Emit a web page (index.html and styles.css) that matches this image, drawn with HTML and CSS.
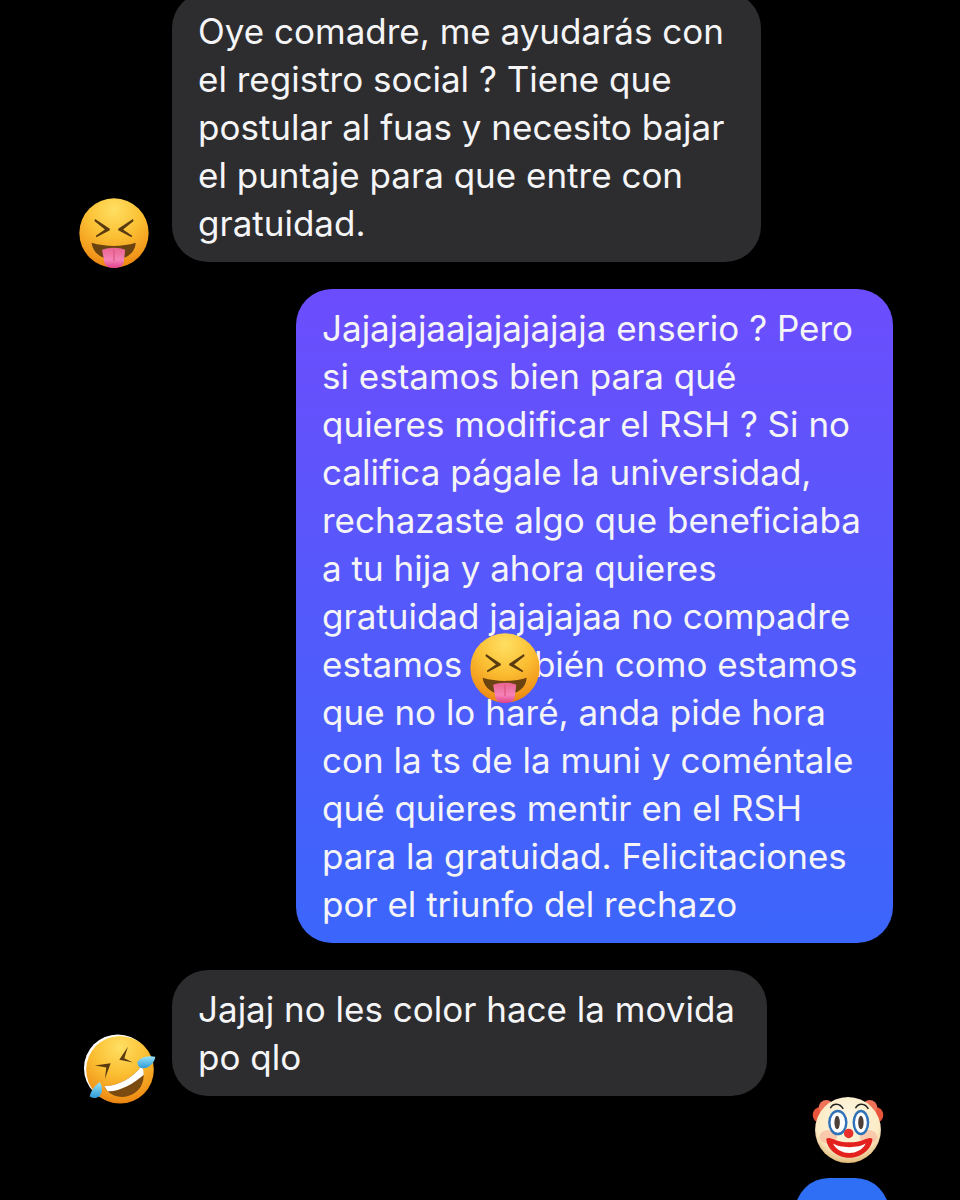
FILE: index.html
```html
<!DOCTYPE html>
<html lang="es">
<head>
<meta charset="utf-8">
<title>Chat</title>
<link rel="stylesheet" href="styles.css">
</head>
<body>
<svg class="defs" width="0" height="0" aria-hidden="true">
  <defs>
    <radialGradient id="face" cx="50%" cy="16%" r="90%">
      <stop offset="0" stop-color="#ffdf62"/>
      <stop offset=".45" stop-color="#fbbf33"/>
      <stop offset=".8" stop-color="#f2981c"/>
      <stop offset="1" stop-color="#e47a0c"/>
    </radialGradient>
    <linearGradient id="tongue" x1="0" y1="0" x2="0" y2="1">
      <stop offset="0" stop-color="#e8648f"/>
      <stop offset=".6" stop-color="#f583b8"/>
      <stop offset="1" stop-color="#e0408c"/>
    </linearGradient>
    <radialGradient id="cream" cx="50%" cy="35%" r="68%">
      <stop offset="0" stop-color="#fff9e6"/>
      <stop offset=".72" stop-color="#fbeac4"/>
      <stop offset="1" stop-color="#dcb26e"/>
    </radialGradient>
    <linearGradient id="tear" x1="0" y1="0" x2="0" y2="1">
      <stop offset="0" stop-color="#98e4f6"/>
      <stop offset="1" stop-color="#2f9bd8"/>
    </linearGradient>
    <symbol id="squint" viewBox="0 0 100 100">
      <circle cx="50" cy="50" r="49.5" fill="url(#face)"/>
      <path d="M23 30 L44 44 L44 46 L25 56 L24 54 L37 45 L22 33 Z" fill="#5a3a10"/>
      <path d="M77 30 L56 44 L56 46 L75 56 L76 54 L63 45 L78 33 Z" fill="#5a3a10"/>
      <path d="M18 64 C38 70 62 70 81 64 C80 80 66 88 50 88 C34 88 20 80 18 64 Z" fill="#6b4311"/>
      <path d="M33 74 C42 70 58 70 66 74 L64 91 C63 103 37 103 36 91 Z" fill="url(#tongue)"/>
      <path d="M50 74 L50 90" stroke="#d9537f" stroke-width="1.6" fill="none"/>
    </symbol>
    <symbol id="rofl" viewBox="0 0 100 100">
      <circle cx="47" cy="49" r="47" fill="#fff"/>
      <circle cx="50" cy="51" r="47" fill="url(#face)"/>
      <path d="M61 19 L49 37 L68 41 L56 35 Z" fill="#5a3a10"/>
      <path d="M15 45 L37 42 L29 64 L31 48 Z" fill="#5a3a10"/>
      <path d="M28 74 C48 74 68 62 80 46 C88 66 78 84 60 88 C48 91 34 86 28 74 Z" fill="#7a4a10"/>
      <path d="M28 74 C48 74 68 62 80 46 C82 50 83 54 83 58 C70 70 48 82 33 81 Z" fill="#fff"/>
      <path d="M74 40 C80 33 90 31 99 33 C98 42 90 49 82 49 C77 49 74 45 74 40 Z" fill="url(#tear)"/>
      <path d="M22 68 C26 74 26 82 22 87 C18 91 11 91 8 88 C9 81 15 73 22 68 Z" fill="url(#tear)"/>
    </symbol>
    <symbol id="clown" viewBox="-3 0 106 100">
      <circle cx="10" cy="28" r="12" fill="#e8553a"/>
      <circle cx="18" cy="17" r="11" fill="#ef7359"/>
      <circle cx="90" cy="28" r="12" fill="#e8553a"/>
      <circle cx="82" cy="17" r="11" fill="#ef7359"/>
      <circle cx="50" cy="50" r="48.5" fill="url(#cream)"/>
      <ellipse cx="21" cy="60" rx="13" ry="10" fill="#f6a68d" opacity=".5"/>
      <ellipse cx="80" cy="60" rx="13" ry="10" fill="#f6a68d" opacity=".5"/>
      <path d="M24 18 C28 10 38 10 43 19" stroke="#222" stroke-width="2.2" fill="none"/>
      <path d="M61 18 C65 10 75 10 80 19" stroke="#222" stroke-width="2.2" fill="none"/>
      <ellipse cx="35" cy="39" rx="12.5" ry="17" fill="#fff" stroke="#2f72b8" stroke-width="3.6"/>
      <ellipse cx="69" cy="39" rx="10.5" ry="17" fill="#fff" stroke="#2f72b8" stroke-width="3.6"/>
      <ellipse cx="34" cy="39" rx="4" ry="10" fill="#4d4038"/>
      <ellipse cx="69" cy="39" rx="4" ry="10" fill="#4d4038"/>
      <circle cx="51" cy="55" r="7" fill="#e9302c"/>
      <path d="M18 63 C24 58 30 68 52 68 C74 68 80 58 86 63 C85 80 68 91 52 91 C36 91 19 80 18 63 Z" fill="#e3221e"/>
      <path d="M28 70 C38 77 66 77 76 70 C72 79 62 84 52 84 C42 84 32 79 28 70 Z" fill="#fff"/>
    </symbol>
  </defs>
</svg>

<main class="chat">
  <div class="row row-in">
    <svg class="avatar avatar-first" aria-hidden="true"><use href="#squint"/></svg>
    <p class="bubble bubble-in bubble-a">Oye comadre, me ayudarás con<br>el registro social ? Tiene que<br>postular al fuas y necesito bajar<br>el puntaje para que entre con<br>gratuidad.</p>
  </div>

  <div class="row row-out">
    <div class="bubble-wrap">
      <p class="bubble bubble-out">Jajajajaajajajajaja enserio ? Pero<br>si estamos bien para qué<br>quieres modificar el RSH ? Si no<br>califica págale la universidad,<br>rechazaste algo que beneficiaba<br>a tu hija y ahora quieres<br>gratuidad jajajajaa no compadre<br>estamos tan bién como estamos<br>que no lo haré, anda pide hora<br>con la ts de la muni y coméntale<br>qué quieres mentir en el RSH<br>para la gratuidad. Felicitaciones<br>por el triunfo del rechazo</p>
      <svg class="reaction" aria-hidden="true"><use href="#squint"/></svg>
    </div>
  </div>

  <div class="row row-in">
    <svg class="avatar avatar-rofl" aria-hidden="true"><use href="#rofl"/></svg>
    <p class="bubble bubble-in bubble-c">Jajaj no les color hace la movida<br>po qlo</p>
  </div>

  <div class="row-clown">
    <svg class="clown" aria-hidden="true"><use href="#clown"/></svg>
  </div>

  <div class="row-last">
    <div class="bubble-tail"></div>
  </div>
</main>
</body>
</html>
```

FILE: styles.css
```css
* { box-sizing: border-box; }

html, body {
  margin: 0;
  height: 1200px;
  background: #000;
  overflow: hidden;
}

.defs { display: block; height: 0; }

.chat {
  display: flex;
  flex-direction: column;
  margin-top: -8px;
  font-family: Inter, "Liberation Sans", sans-serif;
  font-size: 35px;
  line-height: 48px;
  color: #f5f5f7;
}

.row {
  display: flex;
  align-items: flex-end;
  margin-bottom: 27px;
}

.row-in { padding-left: 79px; }
.row-out { justify-content: flex-end; padding-right: 67px; }

.bubble {
  margin: 0;
  padding: 15px 26px;
  border-radius: 36px;
  white-space: nowrap;
}

.bubble-in { background: #2d2d2f; }
.bubble-a { width: 589px; margin-left: 23px; }
.bubble-c { width: 595px; margin-left: 21px; }

.bubble-wrap { position: relative; }

.bubble-out {
  width: 597px;
  background: linear-gradient(180deg, #6c4dfd 0%, #3b66fb 100%);
}

.avatar { display: block; flex: none; }
.avatar-first { width: 70px; height: 70px; margin-bottom: -6px; }
.avatar-rofl { width: 72px; height: 72px; margin-left: 5px; margin-bottom: -9px; margin-right: -5px; }

.reaction {
  position: absolute;
  left: 174px;
  top: 344px;
  width: 70px;
  height: 70px;
}

.row-clown {
  display: flex;
  justify-content: flex-end;
  padding-right: 76px;
  margin-top: -27px;
}

.clown { display: block; width: 72px; height: 68px; }

.row-last {
  display: flex;
  justify-content: flex-end;
  padding-right: 71px;
  margin-top: 14px;
}

.bubble-tail {
  width: 94px;
  height: 60px;
  border-radius: 34px 34px 0 0;
  background: #2f6ff6;
}
```
